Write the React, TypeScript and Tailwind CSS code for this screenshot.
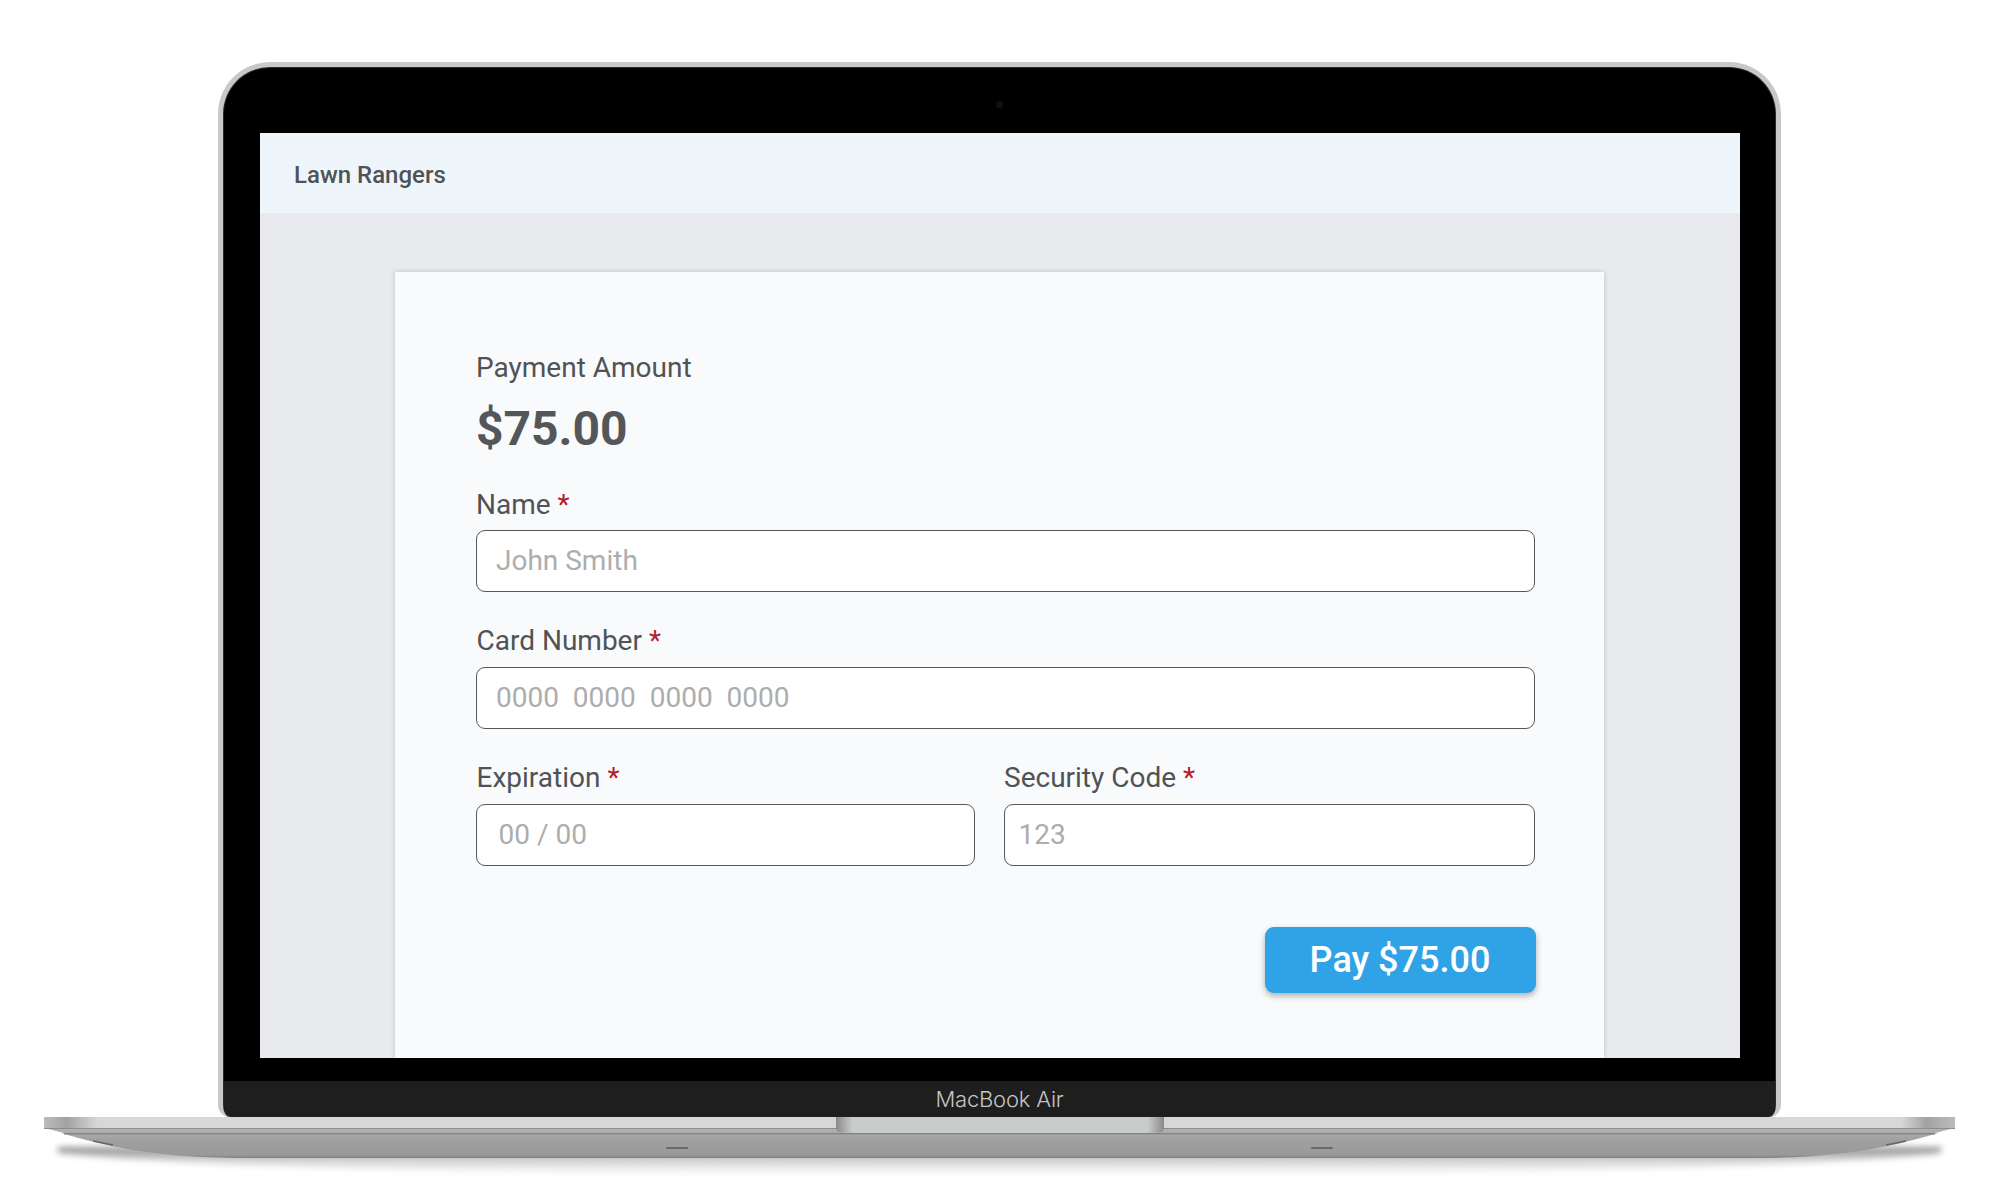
const FONT = "font-['Roboto',sans-serif]";

function Field({ label, placeholder, className, labelClass, inputClass, tight }: { label: string; placeholder: string; className?: string; labelClass?: string; inputClass?: string; tight?: boolean }) {
  return (
    <div className={className}>
      <div className={`h-[38px] text-[28px] leading-[38px] text-[#505356] ${labelClass ?? "pl-[0.5px]"}`}>
        {label} <span className="text-[#b3202a]">*</span>
      </div>
      <div className={`${tight ? "mt-[6px]" : "mt-[7px]"} flex h-[62px] items-center rounded-[9px] border border-[#55585a] bg-white text-[28px] whitespace-pre text-[#adadad] ${inputClass ?? "pl-[19.5px]"}`}>
        {placeholder}
      </div>
    </div>
  );
}

function PaymentForm() {
  return (
    <div className={`flex h-[925px] w-[1480px] flex-col overflow-hidden bg-[#e9eaed] ${FONT}`}>
      <div className="flex h-[80px] shrink-0 items-center bg-[#eef6fc] pt-[4px] pl-[34.5px] text-[24px] font-medium text-[#4f5356]">
        Lawn Rangers
      </div>
      <div className="mt-[59px] ml-[135px] w-[1209px] flex-1 bg-[#f9fafc] pt-[77px] pr-[69px] pl-[81px] shadow-[0_0_5px_rgba(0,0,0,0.18)]">
        <div className="h-[38px] pl-[0.5px] text-[28px] leading-[38px] text-[#505356]">Payment Amount</div>
        <div className="mt-[12px] h-[60px] pl-[0.5px] text-[48px] leading-[60px] font-bold text-[#545759]">$75.00</div>
        <Field className="mt-[27px]" tight label="Name" placeholder="John Smith" />
        <Field className="mt-[30px]" labelClass="pl-px" label="Card Number" placeholder="0000  0000  0000  0000" />
        <div className="mt-[30px] flex gap-[29px]">
          <Field className="w-[499px]" labelClass="pl-px" inputClass="pl-[22px]" label="Expiration" placeholder="00 / 00" />
          <Field className="flex-1" inputClass="pl-[14px]" label="Security Code" placeholder="123" />
        </div>
        <div className="mt-[61px] flex justify-end">
          <button className="-mr-[1px] h-[66px] w-[271px] rounded-[9px] bg-[#2fa3e6] text-[36px] font-medium text-white shadow-[0_3px_6px_rgba(0,0,0,0.3)]">
            Pay $75.00
          </button>
        </div>
      </div>
    </div>
  );
}

function LaptopBase() {
  return (
    <svg width="1911" height="62" viewBox="0 0 1911 62" className="block overflow-visible">
      <defs>
        <linearGradient id="lip" x1="0" x2="1" y1="0" y2="0">
          <stop offset="0" stopColor="#bcbcbc" />
          <stop offset="0.012" stopColor="#a2a2a2" />
          <stop offset="0.028" stopColor="#d6d8d8" />
          <stop offset="0.972" stopColor="#d6d8d8" />
          <stop offset="0.985" stopColor="#a2a2a2" />
          <stop offset="1" stopColor="#bcbcbc" />
        </linearGradient>
        <linearGradient id="body" x1="0" x2="0" y1="0" y2="1">
          <stop offset="0" stopColor="#b4b4b4" />
          <stop offset="0.4" stopColor="#a0a0a0" />
          <stop offset="0.9" stopColor="#999999" />
          <stop offset="1" stopColor="#7e7e7e" />
        </linearGradient>
        <linearGradient id="notch" x1="0" x2="1" y1="0" y2="0">
          <stop offset="0" stopColor="#8a8a8a" />
          <stop offset="0.05" stopColor="#c9cbcb" />
          <stop offset="0.95" stopColor="#c9cbcb" />
          <stop offset="1" stopColor="#8a8a8a" />
        </linearGradient>
        <linearGradient id="shade" x1="0" x2="0" y1="0" y2="1">
          <stop offset="0" stopColor="#8a8a8a" />
          <stop offset="0.45" stopColor="#d2d2d2" />
          <stop offset="1" stopColor="#ffffff" />
        </linearGradient>
        <filter id="soft" x="-2%" y="-60%" width="104%" height="220%">
          <feGaussianBlur stdDeviation="3" />
        </filter>
      </defs>
      {/* shadow under the base */}
      <path d="M14 30 H1897 V36 Q1700 58 955 58 Q210 58 14 36 Z" fill="url(#shade)" filter="url(#soft)" />
      {/* underside */}
      <path d="M0 11 C50 26 100 41 200 41 H1711 C1811 41 1861 26 1911 11 Z" fill="url(#body)" />
      <rect x="20" y="16" width="1871" height="1.5" fill="#858585" />
      <path d="M0 11 L20 16 H0 Z M1911 11 L1891 16 H1911 Z" fill="#ffffff" />
      {/* lip */}
      <rect x="0" y="0" width="1911" height="11" fill="url(#lip)" />
      <rect x="0" y="11" width="1911" height="1" fill="#8b8b8b" />
      {/* hinge notch */}
      <path d="M792 0 H1120 V11 Q1120 16 1112 16 H800 Q792 16 792 11 Z" fill="url(#notch)" />
      {/* feet */}
      <path d="M49 24 L69 28" stroke="#666" strokeWidth="1.5" />
      <path d="M1862 24 L1842 28" stroke="#666" strokeWidth="1.5" />
      <rect x="622" y="30" width="22" height="2" rx="1" fill="#6a6a6a" />
      <rect x="1267" y="30" width="22" height="2" rx="1" fill="#6a6a6a" />
    </svg>
  );
}

export default function App() {
  return (
    <div className="h-[1191px] w-[1999px] overflow-hidden bg-white pt-[62px] pl-[44px]">
      <div className="w-[1911px]">
        <div className="ml-[174px] h-[1055px] w-[1563px] rounded-t-[52px] rounded-b-[12px] border-[5px] border-b-0 border-[#c8c8c8] bg-[#2a2a2a] pt-px pr-px pl-px">
          <div className="flex h-full flex-col items-center overflow-hidden rounded-t-[46px] rounded-b-[10px] bg-black">
            <div className="flex h-[65px] w-full shrink-0 items-start justify-center pt-[33px]">
              <div className="h-[7px] w-[7px] rounded-full bg-[#111113]" />
            </div>
            <PaymentForm />
            <div className="mt-[23px] flex h-[36px] w-full flex-1 items-center justify-center bg-[#1e1e1e] font-['Inter',sans-serif] text-[22px] font-light tracking-[-0.2px] text-[#c4c4c4]">
              MacBook Air
            </div>
          </div>
        </div>
        <LaptopBase />
      </div>
    </div>
  );
}
